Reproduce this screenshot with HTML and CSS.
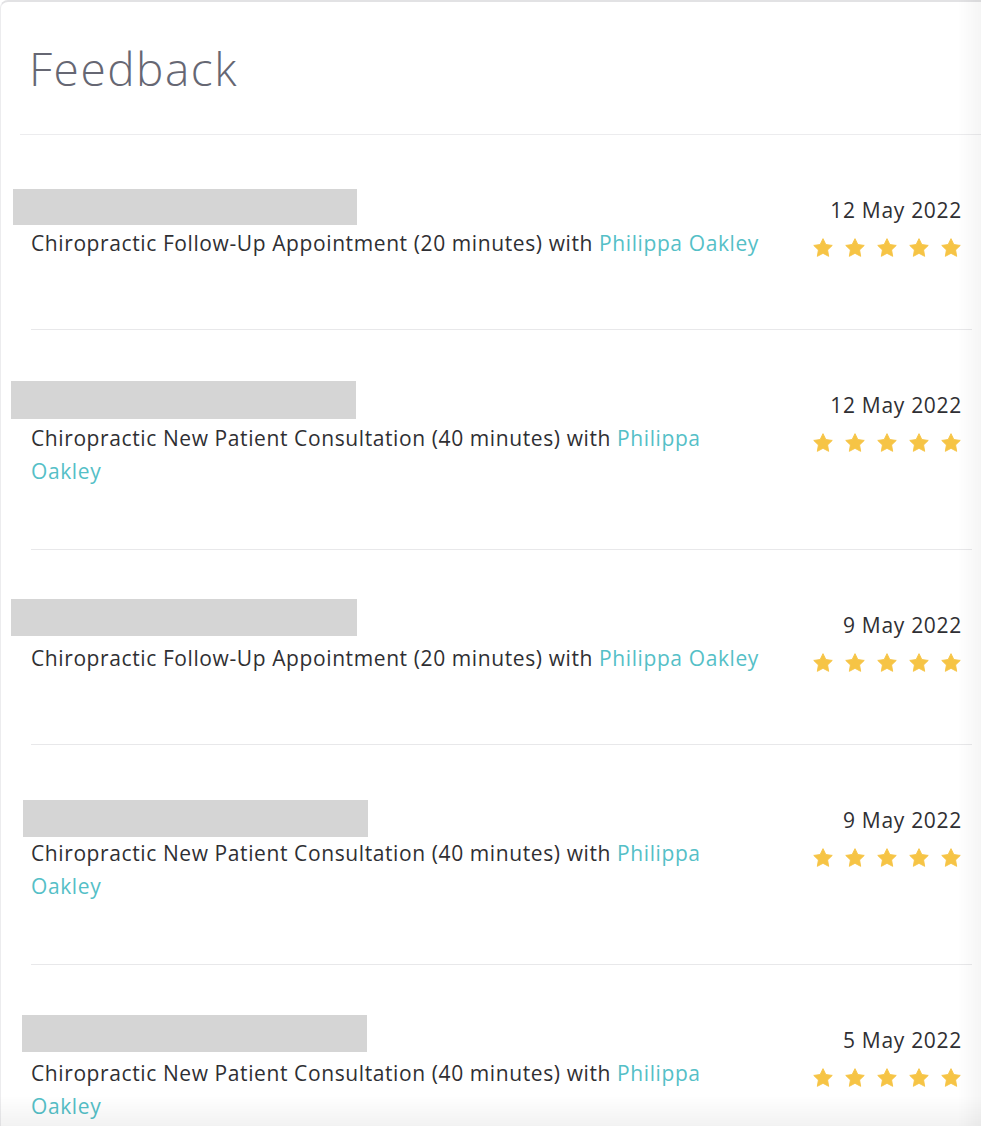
FILE: index.html
```html
<!DOCTYPE html>
<html lang="en">
<head>
<meta charset="utf-8">
<title>Feedback</title>
<link rel="stylesheet" href="styles.css">
</head>
<body>
<div class="card">
  <div class="card-header">
    <h1 class="title">Feedback</h1>
  </div>
  <ul class="feedback-list">
    <li class="feedback-row">
      <div class="feedback-main">
        <div class="patient-name"><span class="redact redact-1"></span></div>
        <p class="appointment">Chiropractic Follow-Up Appointment (20 minutes) with <a class="practitioner" href="#">Philippa Oakley</a></p>
      </div>
      <div class="feedback-meta">
        <div class="date">12 May 2022</div>
        <div class="stars">
          <svg class="star" viewBox="0 0 24 24"><path d="M12 1.8l3.1 6.4 7 1-5.1 4.9 1.2 7L12 17.8l-6.2 3.3 1.2-7L1.9 9.2l7-1z"/></svg>
          <svg class="star" viewBox="0 0 24 24"><path d="M12 1.8l3.1 6.4 7 1-5.1 4.9 1.2 7L12 17.8l-6.2 3.3 1.2-7L1.9 9.2l7-1z"/></svg>
          <svg class="star" viewBox="0 0 24 24"><path d="M12 1.8l3.1 6.4 7 1-5.1 4.9 1.2 7L12 17.8l-6.2 3.3 1.2-7L1.9 9.2l7-1z"/></svg>
          <svg class="star" viewBox="0 0 24 24"><path d="M12 1.8l3.1 6.4 7 1-5.1 4.9 1.2 7L12 17.8l-6.2 3.3 1.2-7L1.9 9.2l7-1z"/></svg>
          <svg class="star" viewBox="0 0 24 24"><path d="M12 1.8l3.1 6.4 7 1-5.1 4.9 1.2 7L12 17.8l-6.2 3.3 1.2-7L1.9 9.2l7-1z"/></svg>
        </div>
      </div>
    </li>
    <li class="feedback-row">
      <div class="feedback-main">
        <div class="patient-name"><span class="redact redact-2"></span></div>
        <p class="appointment">Chiropractic New Patient Consultation (40 minutes) with <a class="practitioner" href="#">Philippa Oakley</a></p>
      </div>
      <div class="feedback-meta">
        <div class="date">12 May 2022</div>
        <div class="stars">
          <svg class="star" viewBox="0 0 24 24"><path d="M12 1.8l3.1 6.4 7 1-5.1 4.9 1.2 7L12 17.8l-6.2 3.3 1.2-7L1.9 9.2l7-1z"/></svg>
          <svg class="star" viewBox="0 0 24 24"><path d="M12 1.8l3.1 6.4 7 1-5.1 4.9 1.2 7L12 17.8l-6.2 3.3 1.2-7L1.9 9.2l7-1z"/></svg>
          <svg class="star" viewBox="0 0 24 24"><path d="M12 1.8l3.1 6.4 7 1-5.1 4.9 1.2 7L12 17.8l-6.2 3.3 1.2-7L1.9 9.2l7-1z"/></svg>
          <svg class="star" viewBox="0 0 24 24"><path d="M12 1.8l3.1 6.4 7 1-5.1 4.9 1.2 7L12 17.8l-6.2 3.3 1.2-7L1.9 9.2l7-1z"/></svg>
          <svg class="star" viewBox="0 0 24 24"><path d="M12 1.8l3.1 6.4 7 1-5.1 4.9 1.2 7L12 17.8l-6.2 3.3 1.2-7L1.9 9.2l7-1z"/></svg>
        </div>
      </div>
    </li>
    <li class="feedback-row">
      <div class="feedback-main">
        <div class="patient-name"><span class="redact redact-3"></span></div>
        <p class="appointment">Chiropractic Follow-Up Appointment (20 minutes) with <a class="practitioner" href="#">Philippa Oakley</a></p>
      </div>
      <div class="feedback-meta">
        <div class="date">9 May 2022</div>
        <div class="stars">
          <svg class="star" viewBox="0 0 24 24"><path d="M12 1.8l3.1 6.4 7 1-5.1 4.9 1.2 7L12 17.8l-6.2 3.3 1.2-7L1.9 9.2l7-1z"/></svg>
          <svg class="star" viewBox="0 0 24 24"><path d="M12 1.8l3.1 6.4 7 1-5.1 4.9 1.2 7L12 17.8l-6.2 3.3 1.2-7L1.9 9.2l7-1z"/></svg>
          <svg class="star" viewBox="0 0 24 24"><path d="M12 1.8l3.1 6.4 7 1-5.1 4.9 1.2 7L12 17.8l-6.2 3.3 1.2-7L1.9 9.2l7-1z"/></svg>
          <svg class="star" viewBox="0 0 24 24"><path d="M12 1.8l3.1 6.4 7 1-5.1 4.9 1.2 7L12 17.8l-6.2 3.3 1.2-7L1.9 9.2l7-1z"/></svg>
          <svg class="star" viewBox="0 0 24 24"><path d="M12 1.8l3.1 6.4 7 1-5.1 4.9 1.2 7L12 17.8l-6.2 3.3 1.2-7L1.9 9.2l7-1z"/></svg>
        </div>
      </div>
    </li>
    <li class="feedback-row">
      <div class="feedback-main">
        <div class="patient-name"><span class="redact redact-4"></span></div>
        <p class="appointment">Chiropractic New Patient Consultation (40 minutes) with <a class="practitioner" href="#">Philippa Oakley</a></p>
      </div>
      <div class="feedback-meta">
        <div class="date">9 May 2022</div>
        <div class="stars">
          <svg class="star" viewBox="0 0 24 24"><path d="M12 1.8l3.1 6.4 7 1-5.1 4.9 1.2 7L12 17.8l-6.2 3.3 1.2-7L1.9 9.2l7-1z"/></svg>
          <svg class="star" viewBox="0 0 24 24"><path d="M12 1.8l3.1 6.4 7 1-5.1 4.9 1.2 7L12 17.8l-6.2 3.3 1.2-7L1.9 9.2l7-1z"/></svg>
          <svg class="star" viewBox="0 0 24 24"><path d="M12 1.8l3.1 6.4 7 1-5.1 4.9 1.2 7L12 17.8l-6.2 3.3 1.2-7L1.9 9.2l7-1z"/></svg>
          <svg class="star" viewBox="0 0 24 24"><path d="M12 1.8l3.1 6.4 7 1-5.1 4.9 1.2 7L12 17.8l-6.2 3.3 1.2-7L1.9 9.2l7-1z"/></svg>
          <svg class="star" viewBox="0 0 24 24"><path d="M12 1.8l3.1 6.4 7 1-5.1 4.9 1.2 7L12 17.8l-6.2 3.3 1.2-7L1.9 9.2l7-1z"/></svg>
        </div>
      </div>
    </li>
    <li class="feedback-row">
      <div class="feedback-main">
        <div class="patient-name"><span class="redact redact-5"></span></div>
        <p class="appointment">Chiropractic New Patient Consultation (40 minutes) with <a class="practitioner" href="#">Philippa Oakley</a></p>
      </div>
      <div class="feedback-meta">
        <div class="date">5 May 2022</div>
        <div class="stars">
          <svg class="star" viewBox="0 0 24 24"><path d="M12 1.8l3.1 6.4 7 1-5.1 4.9 1.2 7L12 17.8l-6.2 3.3 1.2-7L1.9 9.2l7-1z"/></svg>
          <svg class="star" viewBox="0 0 24 24"><path d="M12 1.8l3.1 6.4 7 1-5.1 4.9 1.2 7L12 17.8l-6.2 3.3 1.2-7L1.9 9.2l7-1z"/></svg>
          <svg class="star" viewBox="0 0 24 24"><path d="M12 1.8l3.1 6.4 7 1-5.1 4.9 1.2 7L12 17.8l-6.2 3.3 1.2-7L1.9 9.2l7-1z"/></svg>
          <svg class="star" viewBox="0 0 24 24"><path d="M12 1.8l3.1 6.4 7 1-5.1 4.9 1.2 7L12 17.8l-6.2 3.3 1.2-7L1.9 9.2l7-1z"/></svg>
          <svg class="star" viewBox="0 0 24 24"><path d="M12 1.8l3.1 6.4 7 1-5.1 4.9 1.2 7L12 17.8l-6.2 3.3 1.2-7L1.9 9.2l7-1z"/></svg>
        </div>
      </div>
    </li>
  </ul>
</div>
<div class="edge-fade"></div>
</body>
</html>
```

FILE: styles.css
```css
html, body {
  margin: 0;
  padding: 0;
  background: #ffffff;
}

body {
  font-family: "Open Sans", Lato, "Liberation Sans", sans-serif;
  color: #2f2f33;
  overflow: hidden;
  height: 1126px;
}

.card {
  background: #ffffff;
  border-top: 2px solid #e2e2e4;
  border-left: 1px solid #ececee;
  border-top-left-radius: 8px;
  min-height: 1124px;
  box-sizing: border-box;
}

.card-header {
  margin-left: 19px;
  padding: 40px 9px 40px;
  border-bottom: 1px solid #ececee;
}

.title {
  margin: 0;
  font-family: "Open Sans", Lato, sans-serif;
  font-weight: 300;
  font-size: 46px;
  line-height: 52px;
  letter-spacing: 1.5px;
  color: #666773;
}

.feedback-list {
  list-style: none;
  margin: 0;
  padding: 0;
}

.feedback-row {
  display: flex;
  justify-content: space-between;
  align-items: flex-start;
  margin: 0 9px 0 30px;
  padding: 59px 11px 61px 0;
  border-bottom: 1px solid #e8e8ea;
}

.feedback-main {
  flex: 0 1 736px;
}

.patient-name {
  position: relative;
  height: 33px;
}

.redact {
  position: absolute;
  background: #d5d5d5;
  width: 345px;
  height: 37px;
}

.redact-1 { left: -18px; top: -5px; width: 344px; height: 36px; }
.redact-2 { left: -20px; top: -8px; height: 38px; }
.redact-3 { left: -20px; top: -10px; width: 346px; }
.redact-4 { left: -8px; top: -4px; }
.redact-5 { left: -9px; top: -9px; }

.appointment {
  margin: 0;
  font-size: 21px;
  line-height: 33px;
  letter-spacing: 0.6px;
  color: #2f2f33;
}

.practitioner {
  color: #55bfc7;
  text-decoration: none;
}

.feedback-meta {
  display: flex;
  flex-direction: column;
  align-items: flex-end;
}

.date {
  font-size: 21px;
  line-height: 33px;
  letter-spacing: 0.7px;
  color: #2f2f33;
  white-space: nowrap;
  margin-right: -1px;
}

.stars {
  display: flex;
  gap: 10px;
  height: 41px;
  align-items: center;
  margin-right: -1px;
}

.star {
  width: 22px;
  height: 22px;
  display: block;
}

.star path {
  fill: #f6c445;
  stroke: #f6c445;
  stroke-width: 1;
  stroke-linejoin: round;
}

.edge-fade {
  position: fixed;
  inset: 0;
  pointer-events: none;
  background:
    linear-gradient(to bottom, rgba(0,0,0,0) 1096px, rgba(0,0,0,0.05) 1126px),
    linear-gradient(to right, rgba(0,0,0,0) 958px, rgba(0,0,0,0.04) 981px);
}
```
